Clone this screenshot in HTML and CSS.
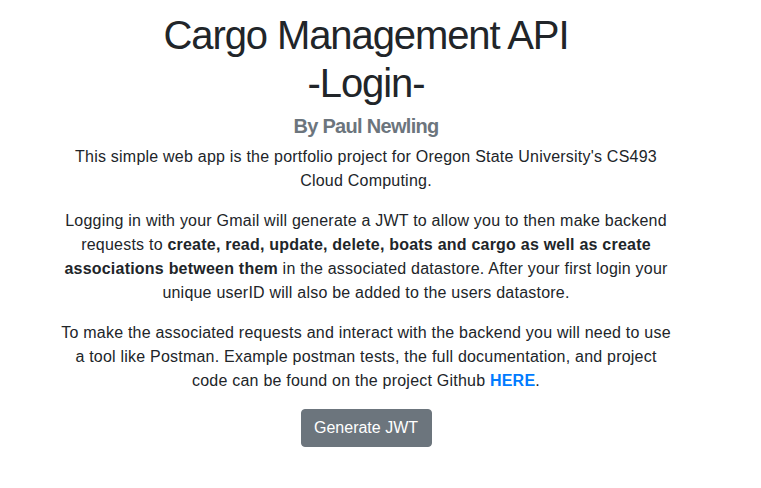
FILE: index.html
```html
<!DOCTYPE html>
<html lang="en">
<head>
<meta charset="utf-8">
<title>Cargo Management API - Login</title>
<link rel="stylesheet" href="styles.css">
</head>
<body>
<main class="page">
  <h1 class="title">Cargo Management API<br>-Login-</h1>
  <h5 class="author">By Paul Newling</h5>
  <p>This simple web app is the portfolio project for Oregon State University's CS493 Cloud Computing.</p>
  <p>Logging in with your Gmail will generate a JWT to allow you to then make backend requests to <b>create, read, update, delete, boats and cargo as well as create associations between them</b> in the associated datastore. After your first login your unique userID will also be added to the users datastore.</p>
  <p>To make the associated requests and interact with the backend you will need to use a tool like Postman. Example postman tests, the full documentation, and project code can be found on the project Github <a class="link" href="#">HERE</a>.</p>
  <button class="btn" type="button">Generate JWT</button>
</main>
</body>
</html>
```
FILE: styles.css
```css
html, body {
  margin: 0;
  padding: 0;
  background: #fff;
}
body {
  font-family: "Liberation Sans", Arial, Helvetica, sans-serif;
  font-size: 16px;
  line-height: 24px;
  color: #212529;
}
.page {
  width: 614px;
  margin-left: 59px;
  padding-top: 11px;
  text-align: center;
}
.title {
  margin: 0 0 7px;
  font-size: 40px;
  line-height: 48px;
  font-weight: 500;
  letter-spacing: -1.1px;
}
.author {
  margin: 0 0 7px;
  font-size: 20px;
  line-height: 24px;
  font-weight: 700;
  color: #6c757d;
  letter-spacing: -0.7px;
}
p {
  margin: 0 0 16px;
  letter-spacing: 0.22px;
}
b {
  font-weight: 700;
}
.link {
  color: #007bff;
  font-weight: 700;
  text-decoration: none;
}
.btn {
  font-family: inherit;
  font-size: 16px;
  line-height: 24px;
  padding: 6px 12px;
  height: 38px;
  width: 131px;
  color: #fff;
  background: #6c757d;
  border: 1px solid #6c757d;
  border-radius: 4px;
  cursor: pointer;
}
```
